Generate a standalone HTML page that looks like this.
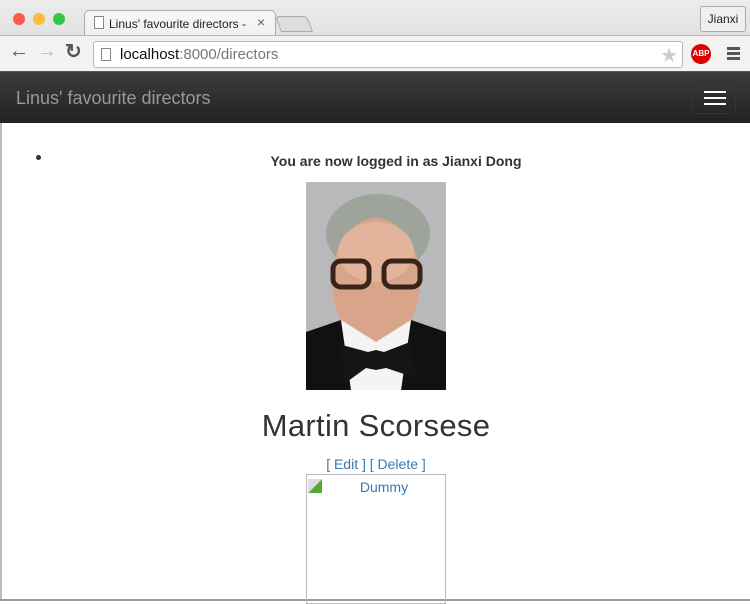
<!DOCTYPE html>
<html><head><style>
*{margin:0;padding:0;box-sizing:border-box}
body{width:750px;height:601px;overflow:hidden;background:#fff;font-family:"Liberation Sans",Arial,sans-serif;position:relative}
.chrome{position:absolute;left:0;top:0;width:750px;height:71px;background:linear-gradient(#ececec,#d8d8d8)}
.tab{position:absolute;left:84px;top:10px;width:192px;height:26px;background:linear-gradient(#f7f7f7,#f0f0f0);border:1px solid #aaa;border-bottom:none;border-radius:5px 5px 0 0}
.toolbar{position:absolute;left:0;top:35px;width:750px;height:36px;background:#f2f2f2;border-top:1px solid #b5b5b5}
.url{position:absolute;left:93px;top:5px;width:590px;height:27px;background:#fff;border:1px solid #b8b8b8;border-radius:3px}
.nav{position:absolute;left:0;top:71px;width:750px;height:52px;background:linear-gradient(#3c3c3c,#222);border-top:1px solid #555}
.a{color:#337ab7}
</style></head><body>
<div class="chrome">
 <div style="position:absolute;left:13px;top:13px;width:12px;height:12px;border-radius:50%;background:#fc5753"></div>
 <div style="position:absolute;left:33px;top:13px;width:12px;height:12px;border-radius:50%;background:#fdbc40"></div>
 <div style="position:absolute;left:53px;top:13px;width:12px;height:12px;border-radius:50%;background:#33c748"></div>
 <div class="tab">
  <div style="position:absolute;left:9px;top:5px;width:10px;height:13px;border:1px solid #888;background:#fff"></div>
  <div style="position:absolute;left:24px;top:6px;font-size:12px;color:#222;white-space:nowrap">Linus' favourite directors -</div>
  <div style="position:absolute;left:172px;top:3px;font-size:14px;color:#666">×</div>
 </div>
 <div style="position:absolute;left:278px;top:16px;width:32px;height:16px;background:#ddd;border:1px solid #aaa;border-radius:4px 4px 0 0;transform:skewX(20deg)"></div>
 <div style="position:absolute;left:700px;top:6px;width:46px;height:26px;border:1px solid #aaa;border-radius:3px;background:#f0f0f0;font-size:12px;color:#222;text-align:center;line-height:24px">Jianxi</div>
</div>
<div class="toolbar">
 <div style="position:absolute;left:9px;top:4px;font-size:20px;color:#555;font-weight:bold">←</div>
 <div style="position:absolute;left:37px;top:4px;font-size:20px;color:#bbb;font-weight:bold">→</div>
 <div style="position:absolute;left:65px;top:3px;font-size:20px;color:#555;font-weight:bold">↻</div>
 <div class="url">
  <div style="position:absolute;left:7px;top:6px;width:10px;height:13px;border:1px solid #888"></div>
  <div style="position:absolute;left:26px;top:4px;font-size:15px;color:#111">localhost<span style="color:#777">:8000/directors</span></div>
  <div style="position:absolute;right:4px;top:1px;font-size:20px;color:#ccc">★</div>
 </div>
 <div style="position:absolute;left:691px;top:8px;width:20px;height:20px;border-radius:50%;background:#d00;color:#fff;font-size:8px;font-weight:bold;text-align:center;line-height:20px">ABP</div>
 <div style="position:absolute;left:727px;top:11px;width:13px;height:3px;background:#555;box-shadow:0 5px 0 #555,0 10px 0 #555"></div>
</div>
<div class="nav">
 <div style="position:absolute;left:16px;top:16px;font-size:18px;color:#999">Linus' favourite directors</div>
 <div style="position:absolute;left:692px;top:9px;width:44px;height:33px;border:1px solid #333;border-radius:4px">
  <div style="position:absolute;left:11px;top:9px;width:22px;height:2px;background:#fff;box-shadow:0 6px 0 #fff,0 12px 0 #fff"></div>
 </div>
</div>
<div style="position:absolute;left:0;top:123px;width:2px;height:478px;background:#bbb"></div>
<div style="position:absolute;left:0;top:599px;width:750px;height:2px;background:#999"></div>
<div style="position:absolute;left:36px;top:155px;width:5px;height:5px;border-radius:50%;background:#333"></div>
<div style="position:absolute;left:0;top:153px;width:792px;text-align:center;font-size:14px;font-weight:bold;color:#333">You are now logged in as Jianxi Dong</div>
<svg style="position:absolute;left:306px;top:182px" width="140" height="208" viewBox="0 0 140 208">
 <rect width="140" height="208" fill="#b9b9bb"/>
 <ellipse cx="72" cy="52" rx="52" ry="40" fill="#9ea39c"/>
 <ellipse cx="70" cy="100" rx="44" ry="64" fill="#d9a58a"/>
 <ellipse cx="70" cy="70" rx="38" ry="30" fill="#e2b49c"/>
 <path d="M0 150 L35 138 L48 208 L0 208Z" fill="#111"/>
 <path d="M105 138 L140 150 L140 208 L95 208Z" fill="#111"/>
 <path d="M35 138 L70 160 L105 138 L95 208 L45 208Z" fill="#f4f4f4"/>
 <path d="M36 163 L62 170 L70 168 L78 170 L104 160 L110 196 L80 186 L70 188 L60 186 L38 202Z" fill="#151515"/>
 <rect x="27" y="79" width="36" height="26" rx="8" fill="none" stroke="#3a2418" stroke-width="5"/>
 <rect x="78" y="79" width="36" height="26" rx="8" fill="none" stroke="#3a2418" stroke-width="5"/>
</svg>
<div style="position:absolute;left:0;top:408px;width:752px;text-align:center;font-size:31px;color:#333;letter-spacing:0.3px">Martin Scorsese</div>
<div style="position:absolute;left:0;top:456px;width:752px;text-align:center;font-size:14px" class="a">[ Edit ] [ Delete ]</div>
<div style="position:absolute;left:306px;top:474px;width:140px;height:130px;border:1px solid #bbb">
 <div style="position:absolute;left:1px;top:4px;width:14px;height:14px;background:linear-gradient(135deg,#ddd 50%,#5a3 50%)"></div>
 <div style="position:absolute;left:0;top:4px;width:138px;text-align:center;font-size:14px;padding-left:16px" class="a">Dummy</div>
</div>
</body></html>
